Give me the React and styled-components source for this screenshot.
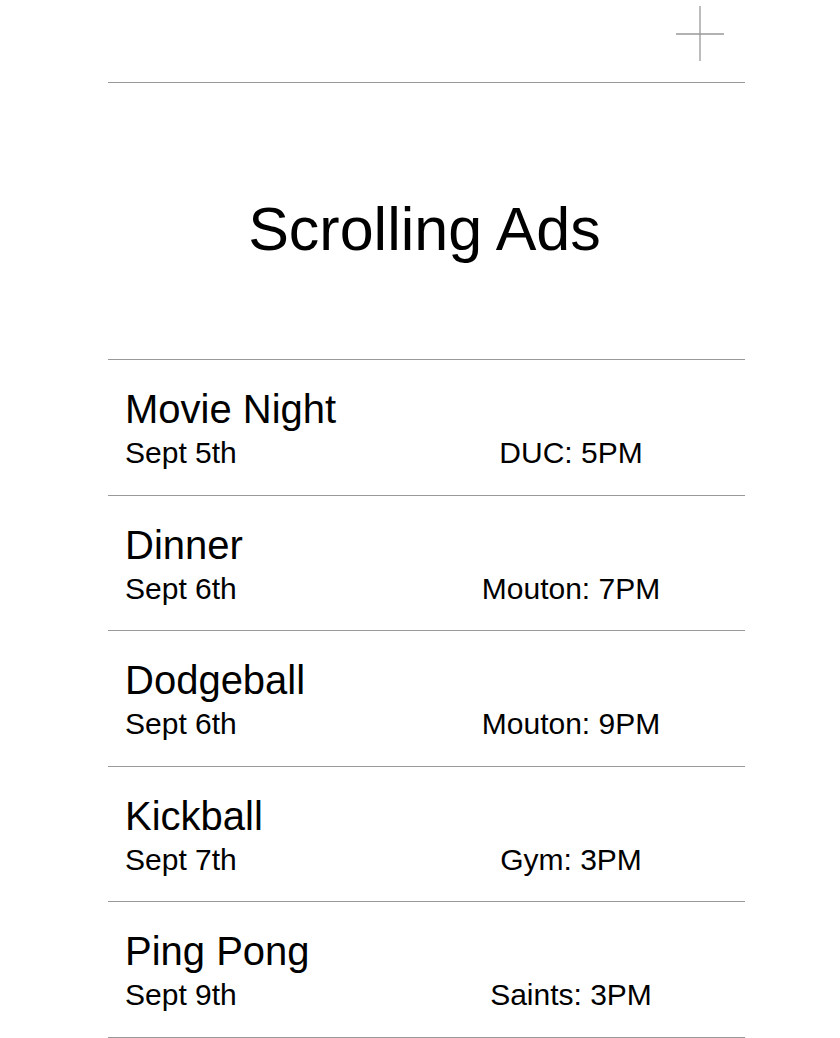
import styled, { createGlobalStyle } from 'styled-components'

const GlobalStyle = createGlobalStyle`
body {
    margin: 0;
    background: #FFFFFF;
    font-family: 'Liberation Sans', Arial, sans-serif;
    color: #000000;
}
`

const Page = styled.div`
width: 637px;
margin-left: 108px;
`

const Header = styled.header`
display: flex;
justify-content: flex-end;
align-items: flex-start;
height: 83px;
box-sizing: border-box;
padding: 6px 21px 0 0;
border-bottom: 1px solid #999999;
`

const AddButton = styled.button`
display: flex;
padding: 0;
border: 0;
background: none;
cursor: pointer;
`

const Title = styled.h1`
margin: 111px 0 95px;
font-size: 61px;
font-weight: 400;
line-height: 70px;
text-align: center;
padding-right: 4px;
`

const List = styled.ul`
list-style: none;
margin: 0;
padding: 0;
border-top: 1px solid #999999;
`

const Row = styled.li`
display: flex;
flex-direction: column;
gap: 4px;
padding: 26px 0 24.5px 17px;
border-bottom: 1px solid #999999;
`

const EventName = styled.div`
font-size: 40px;
line-height: 46px;
`

const Details = styled.div`
display: flex;
justify-content: space-between;
align-items: center;
font-size: 30px;
line-height: 34px;
`

const Place = styled.span`
width: 200px;
margin-right: 74px;
text-align: center;
white-space: nowrap;
`

const PlusIcon = () => (
    <svg width="48" height="55" viewBox="0 0 48 55">
        <line x1="24" y1="0" x2="24" y2="55" stroke="#999999" strokeWidth="1.3" />
        <line x1="0" y1="28" x2="48" y2="28" stroke="#999999" strokeWidth="1.3" />
    </svg>
)

const ads = [
    { name: 'Movie Night', date: 'Sept 5th', place: 'DUC: 5PM' },
    { name: 'Dinner', date: 'Sept 6th', place: 'Mouton: 7PM' },
    { name: 'Dodgeball', date: 'Sept 6th', place: 'Mouton: 9PM' },
    { name: 'Kickball', date: 'Sept 7th', place: 'Gym: 3PM' },
    { name: 'Ping Pong', date: 'Sept 9th', place: 'Saints: 3PM' },
]

const App = () => {
    return (
        <Page>
            <GlobalStyle />
            <Header>
                <AddButton aria-label="Add">
                    <PlusIcon />
                </AddButton>
            </Header>
            <Title>Scrolling Ads</Title>
            <List>
                {ads.map((ad) => (
                    <Row key={ad.name}>
                        <EventName>{ad.name}</EventName>
                        <Details>
                            <span>{ad.date}</span>
                            <Place>{ad.place}</Place>
                        </Details>
                    </Row>
                ))}
            </List>
        </Page>
    )
}

export default App
